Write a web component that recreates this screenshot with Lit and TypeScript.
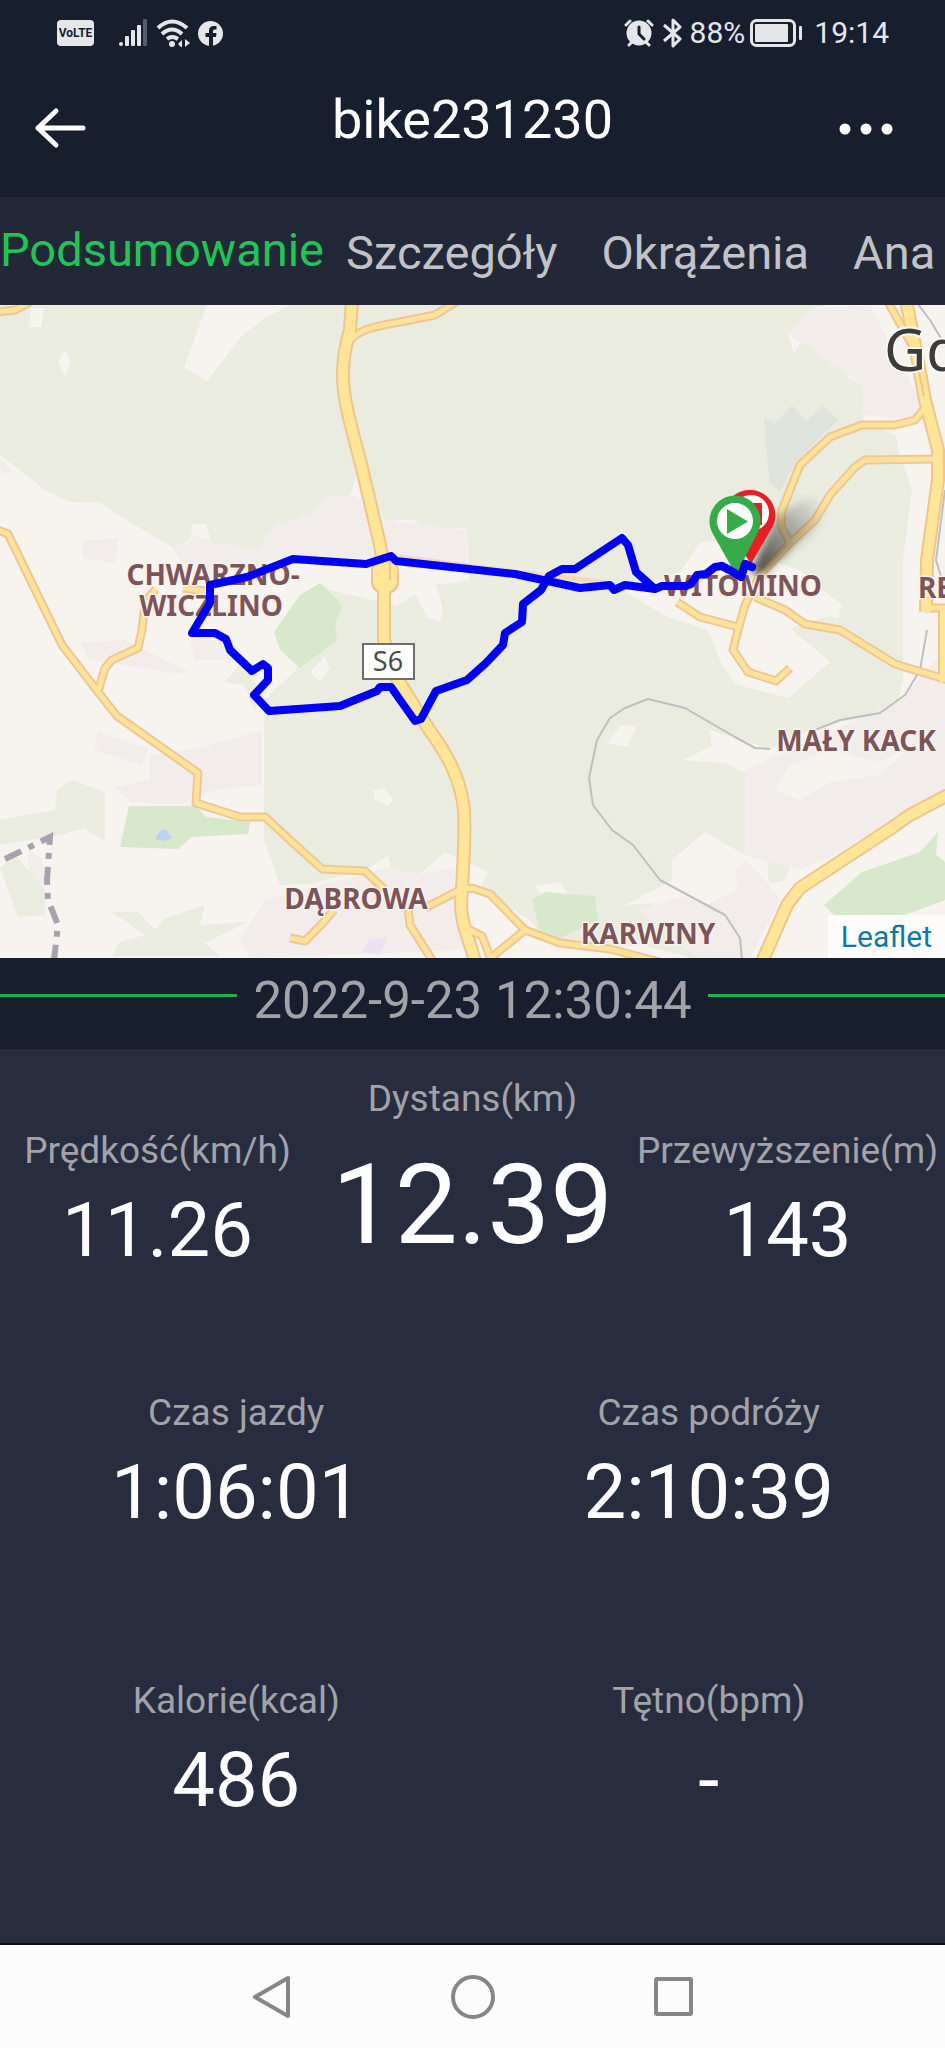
import { LitElement, html, css, svg } from "lit";
import { customElement, property } from "lit/decorators.js";

const ROADS = [
  "M-2 530 L8 534 L62 645 L98 692 L117 716 L198 773 L196 803 L240 817 L265 817 L290 840 L322 869 L365 871 L385 890",
  "M98 692 L105 668 L112 660 L138 648 L142 630 L144 612 L149 597 L156 589",
  "M183 588 L205 591",
  "M-2 312 L15 310 L30 302",
  "M348 345 C352 332 370 327 400 322 L435 315 L456 302",
  "M290 938 L305 941 L320 926 L334 910",
  "M408 908 L410 925 L432 960",
  "M425 908 L460 890 L472 888 L490 894 L525 930 L560 943 L610 949 L660 962",
  "M525 930 L492 957",
  "M470 930 L482 936 L492 962",
  "M928 404 L915 420 L895 425 L862 425 L830 437 L800 465 L782 510 L781 525 L790 543",
  "M938 459 L865 460 L855 467 L830 495 L815 520 L790 543 L760 575 L745 605 L738 630 L733 650 L748 672 L776 681 L790 668",
  "M755 597 L785 610 L805 624 L840 630 L895 664 L948 680",
  "M677 602 L700 617 L738 627",
  "M925 608 L948 608",
  "M888 302 L912 345",
];

const MAJOR = [
  "M352 300 L350 330 C344 350 341 368 344 390 C346 412 355 440 362 468 L380 545 L384 570 L384 640 L395 675 L428 728 C448 755 461 780 464 810 C466 840 462 880 461 905 C461 925 470 940 475 962",
  "M906 300 L915 345 L925 400 L938 450 L938 480 L927 560 L926 612",
  "M948 795 L910 815 L890 829 L800 888 L787 905 L762 962",
];

const FOREST_GAPS = [
  "0,455 45,490 70,502 100,503 130,522 173,548 190,540 193,524 205,524 213,545 245,546 258,550 275,525 310,515 325,497 350,496 356,476 362,500 388,520 415,520 420,528 467,528 469,580 456,583 436,584 443,610 440,622 428,618 415,594 397,606 330,590 320,583 300,600 292,640 300,650 296,672 264,714 264,840 280,885 312,884 340,876 365,870 388,856 392,872 420,874 445,852 458,858 488,872 480,890 530,920 545,940 600,950 640,945 700,960 0,960",
  "788,335 812,309 845,300 945,300 945,960 740,960 655,915 654,903 625,905 672,880 672,860 705,832 745,855 766,848 769,884 785,880 790,866 833,848 836,815 870,803 875,788 850,785 800,802 745,773 725,763 683,760 712,746 710,730 770,749 815,728 895,710 903,680 903,560 912,490 900,455 896,436 863,420 863,385 845,376 862,365 840,350 845,330 812,330 794,353",
  "626,592 680,572 700,543 720,540 770,560 800,570 822,590 842,605 838,618 828,616 790,628 830,662 815,675 788,698 735,684 722,665 708,630 665,616",
  "207,305 290,305 265,318 240,338 222,362 207,381 184,367",
  "31,308 44,308 41,327 29,327",
  "58,362 65,350 71,362 65,376",
  "535,886 560,882 570,898 545,900",
  "373,791 384,788 393,799 388,806 375,800",
  "310,672 325,656 330,668 320,682",
  "606,743 622,725 636,727 628,747",
];

const RESIDENTIAL = [
  "80,642 125,640 190,672 180,674 90,660",
  "98,732 148,748 142,765 94,750",
  "115,787 150,780 150,755 200,748 262,730 262,785 215,790 180,805 130,802",
  "190,640 232,640 240,660 195,660",
  "83,540 118,538 115,563 83,558",
  "0,460 14,472 6,474 0,470",
  "28,850 42,858 45,885 28,880",
  "172,548 190,542 193,535 210,540 213,546 245,546 258,550 275,525 310,515 325,497 355,496 388,520 467,530 467,565 330,560 280,560 240,570 190,575",
  "265,900 340,880 388,868 420,874 455,868 455,905 470,950 250,958 240,940",
  "745,770 900,700 945,650 945,790 835,855 800,870 745,855",
  "640,910 700,890 745,860 765,880 780,900 750,958 700,960",
  "790,335 812,309 870,305 930,420 863,415 863,385 850,376",
];

const FOREST_ISLANDS = [
  "0,820 55,810 57,790 72,780 105,792 105,842 85,828 60,835 0,845",
  "0,868 15,855 45,890 45,915 18,917",
  "112,912 138,912 155,930 165,918 205,905 200,925 248,922 205,943 220,956 112,956 120,942 145,935",
  "224,682 240,665 262,690 255,710 244,685",
  "264,700 298,668 310,700 296,714 264,714",
];

const PARKS = [
  "129,806 196,806 206,817 250,822 248,834 192,837 178,849 120,847",
  "274,632 300,595 320,583 342,605 335,625 337,640 300,668 280,650",
  "532,900 545,892 595,896 598,920 560,938 540,930",
  "824,905 862,872 920,852 938,832 936,855 945,862 945,900 905,915 835,916",
];

@customElement("ride-map")
export class RideMap extends LitElement {
  static styles = css`
    :host { display: block; position: relative; overflow: hidden; background: #f7f4f0; }
    .canvas { display: block; width: 100%; height: auto; }
    .casing { fill: none; stroke: #efc795; stroke-width: 9; stroke-linejoin: round; }
    .fill { fill: none; stroke: #fde29a; stroke-width: 5; stroke-linejoin: round; }
    .casing-major { fill: none; stroke: #efc58e; stroke-width: 14; stroke-linejoin: round; }
    .fill-major { fill: none; stroke: #fee598; stroke-width: 10; stroke-linejoin: round; }
    .rail { fill: none; stroke: #bfc0bd; stroke-width: 2; stroke-linejoin: round; }
    .route { fill: none; stroke: #0000f5; stroke-width: 8; stroke-linejoin: round; stroke-linecap: round; }
    .place {
      font: 700 28px "Noto Sans", sans-serif; fill: #7d5457; text-anchor: middle;
      stroke: #f7f2ee; stroke-width: 3; paint-order: stroke; stroke-linejoin: round;
    }
    .city {
      font: 400 58px "Noto Sans", sans-serif; fill: #3b3c3b;
      stroke: #fbf8f4; stroke-width: 4; paint-order: stroke;
    }
    .shield { font: 400 27px "Noto Sans", sans-serif; fill: #4c4c4c; text-anchor: middle; }
    .credit {
      position: absolute; right: 0; bottom: 0; padding: 0 13px;
      font: 400 30px/43px "Roboto", sans-serif; color: #0b7aa4;
      text-decoration: none; background: rgba(255, 255, 255, 0.72);
    }
  `;

  render() {
    return html`
      <svg class="canvas" viewBox="0 305 945 653" role="img" aria-label="Mapa trasy">
        <defs>
          <linearGradient id="shade" x1="0" y1="1" x2="1" y2="0">
            <stop offset="0" stop-color="#222" stop-opacity="0.95" />
            <stop offset="0.5" stop-color="#444" stop-opacity="0.5" />
            <stop offset="1" stop-color="#555" stop-opacity="0" />
          </linearGradient>
          <filter id="soft" x="-20%" y="-20%" width="140%" height="140%">
            <feGaussianBlur stdDeviation="4" />
          </filter>
        </defs>
        <rect x="0" y="305" width="945" height="653" fill="#e9ecdf" />
        ${FOREST_GAPS.map((p) => svg`<polygon points=${p} fill="#f7f4f0" />`)}
        ${RESIDENTIAL.map((p) => svg`<polygon points=${p} fill="#f2edea" />`)}
        <polygon points="790,765 830,750 880,762 912,745 880,775 830,782 800,800 775,790" fill="#f7f4f0" />
        <polygon points="672,860 705,832 745,860 735,872 738,890 705,905 680,895" fill="#f7f4f0" />
        <polygon points="790,935 815,900 835,920 825,958 775,958" fill="#f7f4f0" />
        ${FOREST_ISLANDS.map((p) => svg`<polygon points=${p} fill="#e9ecdf" />`)}
        ${PARKS.map((p) => svg`<polygon points=${p} fill="#d8e8ca" />`)}
        <polygon points="155,839 160,831 166,829 172,838 164,841" fill="#bcd0ef" />
        <polygon points="368,940 388,936 380,955 362,952" fill="#ebe3f2" />
        <polygon points="764,417 775,424 792,405 806,422 822,405 838,420 815,442 790,472 780,492 770,482 765,440" fill="#dfe5dd" />

        <path class="rail" d="M927 630 L920 670 L905 695 L880 713 L840 720 L815 730" />
        <path class="rail" d="M770 749 L755 748 L735 737 L685 708 L648 699 L625 708 L610 718 L597 740 L589 778 L593 805 L612 830 L633 845 L660 880 L725 915 L740 938 L742 960" />
        <path class="rail" d="M917 303 L930 320 L948 350 M945 490 L936 560 L945 590" />

        <path d="M5 859 L50 837 L47 880 L48 900 L58 925 L54 960" fill="none" stroke="#a7a2ad" stroke-width="6"
          stroke-dasharray="18 8 6 8" />

        <path d="M391 556 L515 572 L610 583" fill="none" stroke="#f6d9bd" stroke-width="5" />
        ${ROADS.map((d) => svg`<path class="casing" d=${d} />`)}
        ${MAJOR.map((d) => svg`<path class="casing-major" d=${d} />`)}
        <path d="M945 610 V682" class="casing-major" />
        <rect x="371" y="560" width="28" height="34" rx="12" fill="#efc58e" />
        ${ROADS.map((d) => svg`<path class="fill" d=${d} />`)}
        ${MAJOR.map((d) => svg`<path class="fill-major" d=${d} />`)}
        <path d="M945 610 V682" class="fill-major" />
        <rect x="373" y="560" width="24" height="32" rx="11" fill="#fee598" />
        <path d="M390 562 V580 M915 352 L924 396" stroke="#efc58e" stroke-width="2" />

        <rect x="363" y="644" width="51" height="35" fill="#fff" stroke="#6f6f6f" stroke-width="2" />
        <text class="shield" x="388" y="671">S6</text>
        <text class="city" x="884" y="371">Gd</text>
        <text class="place" x="213" y="585">CHWARZNO-</text>
        <text class="place" x="211" y="616">WICZLINO</text>
        <text class="place" x="743" y="596">WITOMINO</text>
        <text class="place" x="935" y="598">RE</text>
        <text class="place" x="856" y="751">MAŁY KACK</text>
        <text class="place" x="356" y="909">DĄBROWA</text>
        <text class="place" x="648" y="944">KARWINY</text>

        <path d="M750 574 L775 518 L805 498 Q832 500 815 528 L764 572 Z" fill="url(#shade)" filter="url(#soft)" />
        <path class="route" d="M752 567 L745 564 L741 577 L735 573 L722 566 L715 567 L706 574 L697 575 L691 584 L686 586 L662 586 L655 589
          L636 572 L628 545 L622 538 L575 569 L562 569 L549 576 L541 590 L523 604 L522 622 L505 633 L503 645 L486 663 L467 680
          L436 691 L421 719 L415 721 L391 687 L380 687 L377 691 L340 706 L269 711 L254 695 L268 680 L268 668 L263 664 L252 671
          L230 650 L226 639 L215 633 L192 633 L210 603 L210 585 L247 577 L293 559 L366 564 L391 556 L396 561 L515 574 L580 588
          L610 585 L614 590 L625 585 L655 589" />
        <path d="M751 564 L729 530 A25.500 25.500 0 1 1 773 526 Z" fill="#e71f25" />
        <circle cx="751" cy="513" r="18" fill="#fff" />
        <rect x="739" y="503" width="23" height="22" fill="#e71f25" />
        <path d="M736 575 L713 534 A25.500 25.500 0 1 1 757 534 Z" fill="#37ab49" />
        <circle cx="735" cy="521" r="18" fill="#fff" />
        <path d="M727 509 L748 521.500 L727 534 Z" fill="#37ab49" />
        <path class="route" d="M752 567 L745 564 L741 577 L735 573 L722 566" />
      </svg>
      <a class="credit" href="#leaflet">Leaflet</a>
    `;
  }
}

@customElement("ride-stat")
export class RideStat extends LitElement {
  @property() label = "";
  @property() value = "";
  @property({ type: Boolean, reflect: true }) large = false;

  static styles = css`
    :host { display: flex; flex-direction: column; align-items: center; gap: 17px; }
    .label { font-size: 37px; line-height: 44px; color: #a2a3a7; white-space: nowrap; }
    .value { font-size: 76px; line-height: 80px; color: #fff; white-space: nowrap; }
    :host([large]) { gap: 24px; }
    :host([large]) .value { font-size: 112px; line-height: 120px; }
  `;

  render() {
    return html`<span class="label">${this.label}</span><span class="value">${this.value}</span>`;
  }
}

@customElement("app-root")
export class AppRoot extends LitElement {
  static styles = css`
    :host {
      display: flex; flex-direction: column; min-height: 100vh; overflow: hidden;
      background: #272d3f; color: #fff; font-family: "Roboto", sans-serif;
    }
    button { border: 0; padding: 0; background: none; color: inherit; font: inherit; cursor: pointer; }
    svg { display: block; }
    .top { background: #171f2f; }
    .status {
      display: flex; align-items: center; justify-content: space-between;
      height: 66px; padding: 0 56px 0 57px; color: #e4e6ee;
    }
    .group { display: flex; align-items: center; }
    .volte {
      width: 37px; margin-right: 24px; border-radius: 4px; background: #e4e6ea; color: #171f2f;
      font: 700 12px/26px "Roboto", sans-serif; text-align: center;
    }
    .signals { gap: 8px; }
    .clock { font-size: 30px; line-height: 36px; }
    .percent { margin: 0 5px 0 6px; }
    .time { margin-left: 11px; }
    .bar {
      display: grid; grid-template-columns: 1fr auto 1fr; align-items: center;
      height: 131px; padding: 0 34px; box-sizing: border-box;
    }
    .title { margin: 0; padding-bottom: 24px; font-size: 54px; line-height: 64px; font-weight: 400; }
    .back { justify-self: start; padding-bottom: 8px; }
    .more { justify-self: end; padding: 0 18px 6px 0; }
    .tabs {
      display: flex; align-items: center; height: 108px; overflow: hidden;
      background: #222837; font-size: 47px; line-height: 60px; color: #c1c3c7;
    }
    .tab { flex: none; padding: 4px 22px 0; }
    .tab.active { padding: 0 0 2px; color: #1fc655; }
    .date {
      display: grid; grid-template-columns: 1fr auto 1fr; align-items: center; gap: 16px;
      height: 91px; padding-bottom: 16px; box-sizing: border-box; background: #171f2f;
    }
    .rule { height: 3px; background: #1fb04b; }
    .stamp { padding-top: 10px; font-size: 51px; line-height: 56px; color: #a2a3a7; }
    .stats { flex: 1; display: flex; flex-direction: column; padding: 28px 0 0; }
    .three { display: grid; grid-template-columns: repeat(3, 1fr); height: 314px; }
    .side { padding-top: 52px; }
    .two { display: grid; grid-template-columns: repeat(2, 1fr); height: 288px; }
    .two:last-child { height: auto; padding-bottom: 32px; }
    .nav {
      display: flex; justify-content: center; align-items: center; gap: 157px;
      height: 105px; border-top: 2px solid #0b0d18; background: #fcfcfc; box-sizing: border-box;
    }
  `;

  render() {
    return html`
      <header class="top">
        <div class="status">
          <div class="group">
            <span class="volte">VoLTE</span>
            <div class="group signals">
              <svg width="30" height="28" viewBox="0 0 30 28" fill="#e4e6ea">
                <circle cx="3" cy="25" r="2" /><rect x="7" y="17" width="4" height="10" rx="1" />
                <rect x="13" y="11" width="4" height="16" rx="1" /><rect x="19" y="6" width="4" height="21" rx="1" />
                <rect x="25" y="0" width="4" height="27" rx="1" fill="#555c6b" />
              </svg>
              <svg width="34" height="28" viewBox="0 0 34 28" fill="none" stroke="#e4e6ea" stroke-width="4">
                <path d="M2 9 Q16 -4 31 9" /><path d="M6 15 Q16 6 26 15" /><path d="M11 20 Q16 16 22 20" />
                <circle cx="16" cy="25" r="3" fill="#e4e6ea" stroke="none" />
                <path d="M22 25 L26 21 V29 Z M34 24 L29 20 V28 Z" fill="#e4e6ea" stroke="none" />
              </svg>
              <svg width="25" height="25" viewBox="0 0 25 25">
                <circle cx="12.500" cy="12.500" r="12.500" fill="#e4e6ea" />
                <path d="M11 25 V16 H7.500 V12 H11 V9.500 Q11 5 16 5 H18.500 V8.500 H16.500 Q15 8.500 15 10 V12 H18.500 L18 16 H15 V25 Z" fill="#171f2f" />
              </svg>
            </div>
          </div>
          <div class="group clock">
            <svg width="30" height="28" viewBox="0 0 30 28" stroke="#e4e6ea" stroke-linecap="round">
              <circle cx="15" cy="14" r="12.500" fill="#e4e6ea" stroke="none" />
              <path d="M2 6 L6 2 M28 6 L24 2 M5 26 L8 23 M25 26 L22 23" stroke-width="3" />
              <path d="M15 8 V15 L20 20" fill="none" stroke="#171f2f" stroke-width="3" />
            </svg>
            <svg width="30" height="30" viewBox="2 0 30 30" fill="none" stroke="#e4e6ea" stroke-width="3" stroke-linejoin="round">
              <path d="M12 7 L28 21 L21 28 V2 L28 9 L12 23" />
            </svg>
            <span class="percent">88%</span>
            <svg width="53" height="28" viewBox="0 0 53 28" fill="#e4e6ea">
              <rect x="1.500" y="1.500" width="43" height="25" rx="5" fill="none" stroke="#e4e6ea" stroke-width="3" />
              <rect x="5" y="5" width="33" height="18" rx="1" /><rect x="49" y="7" width="3" height="14" rx="1" />
            </svg>
            <span class="time">19:14</span>
          </div>
        </div>
        <div class="bar">
          <button class="back" aria-label="Wstecz">
            <svg width="53" height="42" viewBox="0 0 53 42" fill="none" stroke="#fff" stroke-width="5" stroke-linecap="round" stroke-linejoin="round">
              <path d="M49 21 H4 M22 4 L4 21 L22 38" />
            </svg>
          </button>
          <h1 class="title">bike231230</h1>
          <button class="more" aria-label="Więcej">
            <svg width="54" height="14" viewBox="0 0 54 14" fill="#fff">
              <circle cx="6" cy="7" r="5.500" /><circle cx="27" cy="7" r="5.500" /><circle cx="48" cy="7" r="5.500" />
            </svg>
          </button>
        </div>
      </header>
      <nav class="tabs">
        <button class="tab active">Podsumowanie</button>
        <button class="tab">Szczegóły</button>
        <button class="tab">Okrążenia</button>
        <button class="tab">Ana</button>
      </nav>
      <ride-map></ride-map>
      <div class="date">
        <span class="rule"></span>
        <time class="stamp">2022-9-23 12:30:44</time>
        <span class="rule"></span>
      </div>
      <main class="stats">
        <div class="three">
          <ride-stat class="side" label="Prędkość(km/h)" value="11.26"></ride-stat>
          <ride-stat large label="Dystans(km)" value="12.39"></ride-stat>
          <ride-stat class="side" label="Przewyższenie(m)" value="143"></ride-stat>
        </div>
        <div class="two">
          <ride-stat label="Czas jazdy" value="1:06:01"></ride-stat>
          <ride-stat label="Czas podróży" value="2:10:39"></ride-stat>
        </div>
        <div class="two">
          <ride-stat label="Kalorie(kcal)" value="486"></ride-stat>
          <ride-stat label="Tętno(bpm)" value="-"></ride-stat>
        </div>
      </main>
      <footer class="nav">
        <button aria-label="Wstecz">
          <svg width="44" height="44" viewBox="0 0 44 44" fill="none" stroke="#868686" stroke-width="4" stroke-linejoin="round">
            <path d="M5 22 L38 3 V41 Z" />
          </svg>
        </button>
        <button aria-label="Ekran główny">
          <svg width="44" height="44" viewBox="0 0 44 44" fill="none" stroke="#868686" stroke-width="4">
            <circle cx="22" cy="22" r="20" />
          </svg>
        </button>
        <button aria-label="Ostatnie">
          <svg width="44" height="44" viewBox="0 0 44 44" fill="none" stroke="#868686" stroke-width="4">
            <rect x="4" y="4" width="35" height="35" rx="1" />
          </svg>
        </button>
      </footer>
    `;
  }
}
